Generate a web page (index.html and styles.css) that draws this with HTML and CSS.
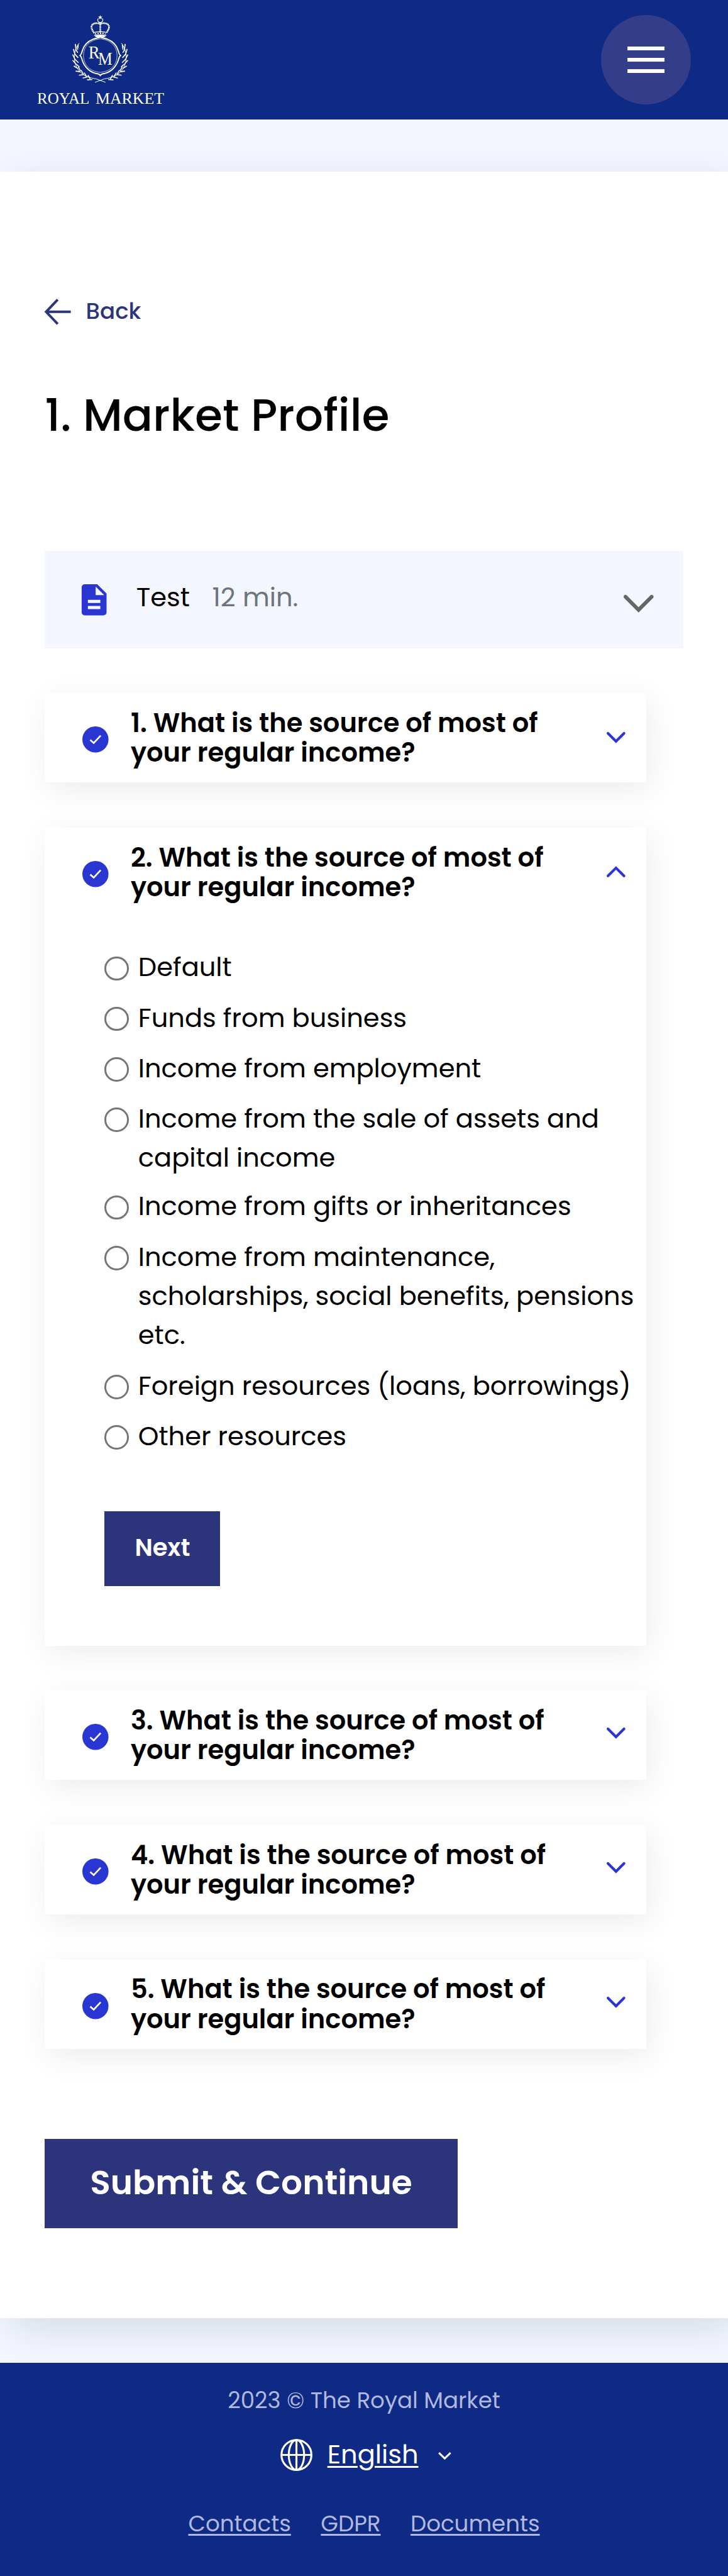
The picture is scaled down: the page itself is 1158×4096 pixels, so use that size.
FILE: index.html
```html
<!DOCTYPE html>
<html lang="en">
<head>
<meta charset="utf-8">
<title>Royal Market</title>
<link rel="stylesheet" href="styles.css">
</head>
<body>
<header class="header">
  <svg class="logo" viewBox="0 0 204 150" fill="none" stroke="#fff">
    <g id="crown" stroke-width="1.2">
      <path d="M101.500 0l1 2.400h2.600l-2 1.700.8 2.600-2.400-1.500-2.400 1.500.8-2.600-2-1.700h2.600z" fill="#fff" stroke="none"/>
      <path d="M98.300 5.500a4 4 0 1 0 6.400 0"/>
      <path d="M101.500 12v16" stroke-width="2.400" stroke-dasharray="2 .5"/>
      <path d="M92 29c-3-4-5-8-4.500-11 1-5 9-6.500 14-3.500 5-3 13-1.500 14 3.500.5 3-1.500 7-4.500 11" stroke-width="2.600" stroke-dasharray="2.200 .5"/>
      <path d="M92.500 27.600q9-2 18 0M91.500 32.600q10-2 20 0"/>
      <path d="M93 30.200q8.500-2 17 0" stroke-width="2" stroke-dasharray="2 2"/>
      <path d="M92 33q9.500-1.500 19 0l-3 2.600h-13z" fill="#fff" stroke="none"/>
    </g>
    <path d="M101.500 35c3 2 7 2 11 3.500 9 3.500 15.500 10.500 18 19 .8 3 1 5.500 3.500 7.500-2.500 2-2.700 4.500-3.500 7.500-4 12-13.500 20.500-25.500 22-1.500.3-2.500 1-3.500 2.500-1-1.500-2-2.200-3.500-2.500-12-1.500-21.500-10-25.500-22-.8-3-1-5.500-3.500-7.500 2.500-2 2.700-4.500 3.500-7.500 2.500-8.500 9-15.500 18-19 4-1.500 8-1.500 11-3.500z" stroke-width="2"/>
    <path d="M101.500 38c16 2 26.500 11 27 27-.5 16-11 25.500-27 27-16-1.500-26.500-11-27-27 .5-16 11-25 27-27z" stroke-width=".7"/>
    <g id="wreath">
      <path d="M67.500 45C57 59 57.500 78 68 90c7 8 17 11 27 12.500l15 5.500" stroke-width="1"/>
      <path d="M66 48l-1 7M61.500 47l1 7M62 55l3 5M58.500 55l2 7M61 63l4.500 5M57.500 64l3 6M61 71l5 5M57.500 73l4.500 5M63 79l4.500 4M59.500 82l5.500 3.500M66.500 84l3 5M62.500 90l6.500 1M71 89l3 5M68 96.500l6.500-.8M76 93l3 5M74 101l6.500-1.500M82 97l3 5M81 104l7-.5" stroke-width="1.700" stroke-linecap="round"/>
    </g>
    <use href="#wreath" transform="matrix(-1 0 0 1 203 0)"/>
    <g class="logo-text">
      <text x="82.500" y="69.500" font-size="29" textLength="18" lengthAdjust="spacingAndGlyphs">R</text>
      <text x="98" y="80" font-size="29" textLength="23" lengthAdjust="spacingAndGlyphs">M</text>
      <text x="0" y="142.500" font-size="25.500" textLength="84" lengthAdjust="spacingAndGlyphs">ROYAL</text>
      <text x="94" y="142.500" font-size="25.500" textLength="110" lengthAdjust="spacingAndGlyphs">MARKET</text>
    </g>
  </svg>
  <button class="menu" aria-label="Menu"><span></span><span></span><span></span></button>
</header>

<main class="main">
  <section class="sheet">
    <a class="back"><svg viewBox="0 0 14 14" fill="none" stroke="currentColor" stroke-width="1.330"><path d="M14 7H1M7 .500L.800 7 7 13.500"/></svg><span>Back</span></a>
    <h1 class="title">1. Market Profile</h1>

    <div class="test">
      <svg class="test-icon" viewBox="0 0 24 24"><path fill="#2936d2" d="M14 2H6c-1.100 0-2 .9-2 2v16c0 1.100.9 2 2 2h12c1.100 0 2-.9 2-2V8l-6-6zm2 16H8v-2h8v2zm0-4H8v-2h8v2zm-3-5V3.500L18.500 9H13z"/></svg>
      <span class="test-name">Test</span><span class="test-time">12 min.</span>
      <svg class="test-chev" viewBox="0 0 16 9.200" fill="none" stroke="#666" stroke-width="2" stroke-linecap="round"><path d="M1 1l7 7 7-7"/></svg>
    </div>

    <div class="cards">
      <article class="card">
        <div class="card-head low"><svg class="check" viewBox="0 0 14 14"><circle cx="7" cy="7" r="7" fill="#2936d2"/><path d="M4.200 7.200l1.900 1.700 3.700-4" fill="none" stroke="#fff" stroke-width=".9"/></svg><h2 class="q">1. What is the source of most of<br>your regular income?</h2><svg class="chev" viewBox="0 0 10 5.700"><path d="M.700.700L5 5 9.300.700"/></svg></div>
      </article>

      <article class="card">
        <div class="card-head low"><svg class="check" viewBox="0 0 14 14"><circle cx="7" cy="7" r="7" fill="#2936d2"/><path d="M4.200 7.200l1.900 1.700 3.700-4" fill="none" stroke="#fff" stroke-width=".9"/></svg><h2 class="q">2. What is the source of most of<br>your regular income?</h2><svg class="chev" viewBox="0 0 10 5.700"><path d="M.700 5L5 .700 9.300 5"/></svg></div>
        <div class="options">
          <label class="option"><i class="radio"></i><span>Default</span></label>
          <label class="option"><i class="radio"></i><span>Funds from business</span></label>
          <label class="option"><i class="radio"></i><span>Income from employment</span></label>
          <label class="option tight"><i class="radio"></i><span>Income from the sale of assets and<br>capital income</span></label>
          <label class="option"><i class="radio"></i><span>Income from gifts or inheritances</span></label>
          <label class="option"><i class="radio"></i><span>Income from maintenance,<br>scholarships, social benefits, pensions<br>etc.</span></label>
          <label class="option"><i class="radio"></i><span>Foreign resources (loans, borrowings)</span></label>
          <label class="option"><i class="radio"></i><span>Other resources</span></label>
        </div>
        <button class="next">Next</button>
      </article>

      <article class="card">
        <div class="card-head"><svg class="check" viewBox="0 0 14 14"><circle cx="7" cy="7" r="7" fill="#2936d2"/><path d="M4.200 7.200l1.900 1.700 3.700-4" fill="none" stroke="#fff" stroke-width=".9"/></svg><h2 class="q">3. What is the source of most of<br>your regular income?</h2><svg class="chev" viewBox="0 0 10 5.700"><path d="M.700.700L5 5 9.300.700"/></svg></div>
      </article>
      <article class="card">
        <div class="card-head"><svg class="check" viewBox="0 0 14 14"><circle cx="7" cy="7" r="7" fill="#2936d2"/><path d="M4.200 7.200l1.900 1.700 3.700-4" fill="none" stroke="#fff" stroke-width=".9"/></svg><h2 class="q">4. What is the source of most of<br>your regular income?</h2><svg class="chev" viewBox="0 0 10 5.700"><path d="M.700.700L5 5 9.300.700"/></svg></div>
      </article>
      <article class="card">
        <div class="card-head"><svg class="check" viewBox="0 0 14 14"><circle cx="7" cy="7" r="7" fill="#2936d2"/><path d="M4.200 7.200l1.900 1.700 3.700-4" fill="none" stroke="#fff" stroke-width=".9"/></svg><h2 class="q">5. What is the source of most of<br>your regular income?</h2><svg class="chev" viewBox="0 0 10 5.700"><path d="M.700.700L5 5 9.300.700"/></svg></div>
      </article>
    </div>

    <button class="submit">Submit &amp; Continue</button>
  </section>
</main>

<footer class="footer">
  <p class="copy">2023 © The Royal Market</p>
  <div class="lang">
    <svg class="globe" viewBox="0 0 18 18" fill="none" stroke="#fff" stroke-width="1.100"><circle cx="9" cy="9" r="8.400"/><ellipse cx="9" cy="9" rx="4.300" ry="8.400"/><path d="M9 .600v16.800M.600 9h16.800"/></svg>
    <a class="lang-name">English</a>
    <svg class="lang-chev" viewBox="0 0 7 4" fill="none" stroke="#fff" stroke-width="1"><path d="M.400.400L3.500 3.400 6.600.400"/></svg>
  </div>
  <nav class="links"><a>Contacts</a><a>GDPR</a><a>Documents</a></nav>
</footer>
</body>
</html>
```
FILE: styles.css
```css
/* 1rem = 10 layout pixels of the 390px-wide mobile design */
html { font-size: 29.7027px; overflow-x: hidden; }
* { box-sizing: border-box; margin: 0; padding: 0; }
body { font-family: Poppins, Inter, "Open Sans", sans-serif; color: #000; background: #0e2a84; }
button { border: 0; font-family: inherit; }
svg { display: block; flex: none; overflow: visible; }

.header { height: 6.4rem; background: #0e2a84; display: flex; justify-content: space-between; align-items: flex-start; padding: .8rem 2rem; }
.logo { width: 6.8rem; height: 5rem; }
.logo-text { font-family: "Liberation Serif", serif; fill: #fff; stroke: none; }
.menu { width: 4.8rem; height: 4.8rem; border-radius: 50%; background: #333d89; display: flex; flex-direction: column; align-items: center; justify-content: center; gap: .4rem; }
.menu span { width: 2rem; height: .2rem; background: #fff; }

.main { background: #f4f7ff; padding: 2.8rem 0 2.4rem; overflow: hidden; }
.sheet { background: #fff; height: 114.9rem; padding: 6.5rem 2.4rem 0; box-shadow: .5rem .6rem 2rem rgba(14,32,80,.135); }
.back { display: flex; align-items: center; gap: .8rem; height: 2rem; color: #2c347b; font-size: 1.2rem; font-weight: 500; line-height: 1.94rem; }
.back svg { width: 1.4rem; height: 1.4rem; }
.back span { padding-bottom: .06rem; }
.title { margin-top: 2.75rem; font-size: 2.4rem; line-height: 3.6rem; font-weight: 500; white-space: nowrap; }

.test { margin-top: 5.45rem; height: 5.2rem; background: #f4f7ff; display: flex; align-items: center; padding: 0 1.6rem; font-size: 1.4rem; line-height: 2.1rem; }
.test-icon { width: 2rem; height: 2rem; margin-left: .05rem; }
.test-name { margin-left: 1.25rem; padding-bottom: .2rem; }
.test-time { margin-left: 1.2rem; padding-bottom: .2rem; color: #6c757d; }
.test-chev { width: 1.6rem; height: .92rem; margin: .4rem 0 0 auto; }

.cards { display: flex; flex-direction: column; gap: 2.4rem; width: 32.2rem; margin-top: 2.4rem; }
.card { background: #fff; box-shadow: .2rem .4rem 1.6rem rgba(0,0,0,.08); }
.card-head { height: 4.8rem; display: flex; align-items: flex-start; padding: .8rem 1.1rem 0 2rem; }
.check { width: 1.4rem; height: 1.4rem; margin-top: 1rem; }
.q { margin-left: 1.2rem; flex: 1; font-size: 1.4rem; line-height: 1.6rem; font-weight: 600; white-space: nowrap; }
.chev { width: 1rem; height: .57rem; margin-top: 1.2rem; fill: none; stroke: #2936d2; stroke-width: 1.4; stroke-linecap: round; }
.low .chev { margin-top: 1.3rem; }

.options { padding: 1.65rem 0 0 3.2rem; font-size: 1.4rem; line-height: 2.1rem; display: flex; flex-direction: column; gap: .6rem; }
.option { display: flex; white-space: nowrap; }
.option.tight { margin-bottom: -.1rem; }
.radio { flex: none; width: 1.3rem; height: 1.3rem; margin: .45rem .5rem 0 0; border: .102rem solid #767676; border-radius: 50%; background: #fff; }
.next { display: block; margin: 2.95rem 0 3.2rem 3.2rem; width: 6.2rem; height: 4rem; padding-bottom: .1rem; background: #2c347b; color: #fff; font-size: 1.3rem; font-weight: 600; }
.submit { display: block; margin-top: 4.8rem; width: 22.1rem; height: 4.8rem; padding-bottom: .08rem; background: #2c347b; color: #fff; font-size: 1.8rem; font-weight: 600; white-space: nowrap; }

.footer { height: 11.4rem; background: #0e2a84; color: #b0b8de; display: flex; flex-direction: column; align-items: center; font-size: 1.2rem; line-height: 1.8rem; overflow: hidden; }
.copy { margin-top: 1.1rem; }
.lang { display: flex; align-items: center; margin-top: .97rem; padding-left: .2rem; color: #fff; font-size: 1.4rem; line-height: 2.1rem; }
.globe { width: 1.72rem; height: 1.72rem; }
.lang-name { margin: 0 1.05rem 0 .78rem; text-decoration: underline; text-decoration-thickness: .1rem; text-underline-offset: .12rem; }
.lang-chev { width: .7rem; height: .4rem; margin-top: .1rem; }
.links { display: flex; gap: 1.6rem; margin-top: 1.73rem; }
.links a { text-decoration: underline; text-decoration-thickness: .1rem; text-underline-offset: .12rem; }
```
